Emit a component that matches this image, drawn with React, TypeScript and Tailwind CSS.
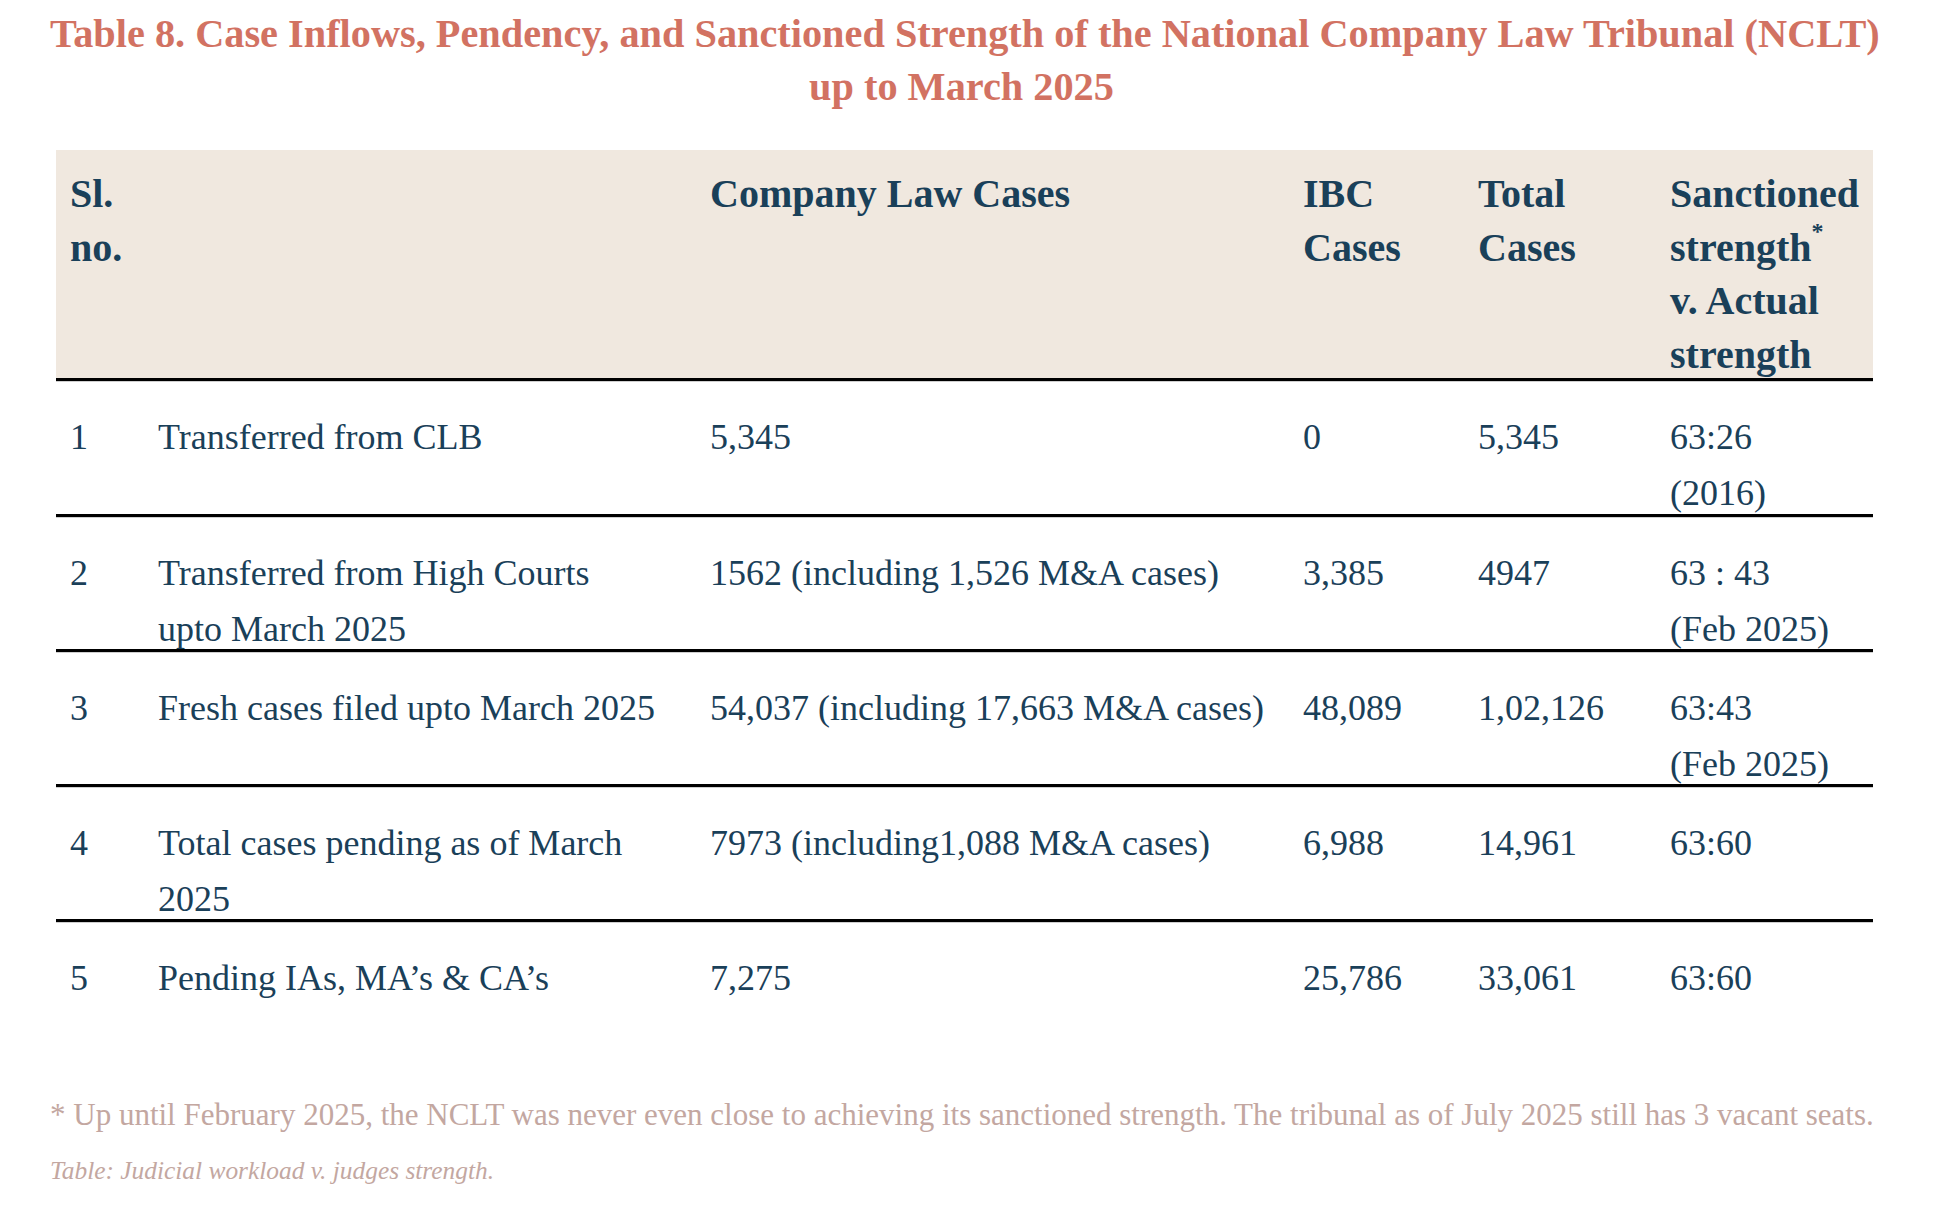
const serif = { fontFamily: '"Liberation Serif", "Times New Roman", serif' };

interface Row {
  no: string;
  desc: string[];
  company: string;
  ibc: string;
  total: string;
  strength: string[];
}

const rows: Row[] = [
  { no: '1', desc: ['Transferred from CLB'], company: '5,345', ibc: '0', total: '5,345', strength: ['63:26', '(2016)'] },
  {
    no: '2',
    desc: ['Transferred from High Courts', 'upto March 2025'],
    company: '1562 (including 1,526 M&A cases)',
    ibc: '3,385',
    total: '4947',
    strength: ['63 : 43', '(Feb 2025)']
  },
  {
    no: '3',
    desc: ['Fresh cases filed upto March 2025'],
    company: '54,037 (including 17,663 M&A cases)',
    ibc: '48,089',
    total: '1,02,126',
    strength: ['63:43', '(Feb 2025)']
  },
  {
    no: '4',
    desc: ['Total cases pending as of March', '2025'],
    company: '7973 (including1,088 M&A cases)',
    ibc: '6,988',
    total: '14,961',
    strength: ['63:60']
  },
  { no: '5', desc: ['Pending IAs, MA’s & CA’s'], company: '7,275', ibc: '25,786', total: '33,061', strength: ['63:60'] }
];

const cols = 'grid grid-cols-[88px_552px_593px_175px_192px_217px]';

const Lines = ({ lines }: { lines: string[] }) => (
  <>
    {lines.map((line, i) => (
      <div key={i} className="whitespace-nowrap">
        {line}
      </div>
    ))}
  </>
);

const App = () => {
  return (
    <div className="min-h-screen bg-white" style={serif}>
      <div className="w-[1823px] ml-[50px] pt-[7px]">
        <h1 className="text-center text-[40.3px] leading-[53px] font-bold text-[#d27262] whitespace-nowrap">
          Table 8. Case Inflows, Pendency, and Sanctioned Strength of the National Company Law Tribunal (NCLT)
          <br />
          up to March 2025
        </h1>

        <div className="ml-[6px] mt-[37px] w-[1817px]">
          <div
            className={`${cols} h-[231px] bg-[#f0e8df] border-b-[3px] border-black shadow-[0_1px_0_#cfcfcf] text-[40px] leading-[53.5px] font-bold text-[#1a4059]`}
          >
            <div className="pt-[17px] px-[14px]">
              <Lines lines={['Sl.', 'no.']} />
            </div>
            <div />
            <div className="pt-[17px] px-[14px]">
              <Lines lines={['Company Law Cases']} />
            </div>
            <div className="pt-[17px] px-[14px]">
              <Lines lines={['IBC', 'Cases']} />
            </div>
            <div className="pt-[17px] px-[14px]">
              <Lines lines={['Total', 'Cases']} />
            </div>
            <div className="pt-[17px] px-[14px]">
              <div className="whitespace-nowrap">Sanctioned</div>
              <div className="whitespace-nowrap">
                strength<sup className="text-[24px] -top-[0.9em]">*</sup>
              </div>
              <div className="whitespace-nowrap">v. Actual</div>
              <div className="whitespace-nowrap">strength</div>
            </div>
          </div>

          {rows.map((row, i) => {
            const last = i === rows.length - 1;
            const height = i === 0 ? 'h-[136px]' : last ? 'h-[132px]' : 'h-[135px]';
            const border = last ? '' : 'border-b-[3px] border-black shadow-[0_1px_0_#cfcfcf]';
            return (
              <div
                key={row.no}
                className={`${cols} ${height} ${border} text-[36px] leading-[56px] text-[#1a4059]`}
              >
                <div className="pt-[28px] px-[14px]">{row.no}</div>
                <div className="pt-[28px] px-[14px]">
                  <Lines lines={row.desc} />
                </div>
                <div className="pt-[28px] px-[14px] whitespace-nowrap">{row.company}</div>
                <div className="pt-[28px] px-[14px]">{row.ibc}</div>
                <div className="pt-[28px] px-[14px]">{row.total}</div>
                <div className="pt-[28px] px-[14px]">
                  <Lines lines={row.strength} />
                </div>
              </div>
            );
          })}
        </div>

        <p className="mt-[39px] text-[31px] leading-[44px] text-[#c3a7a1] whitespace-nowrap">
          * Up until February 2025, the NCLT was never even close to achieving its sanctioned strength. The tribunal as
          of July 2025 still has 3 vacant seats.
        </p>
        <p className="mt-[13px] text-[25.4px] leading-[40px] italic text-[#c3a7a1] whitespace-nowrap">
          Table: Judicial workload v. judges strength.
        </p>
      </div>
    </div>
  );
};

export default App;
